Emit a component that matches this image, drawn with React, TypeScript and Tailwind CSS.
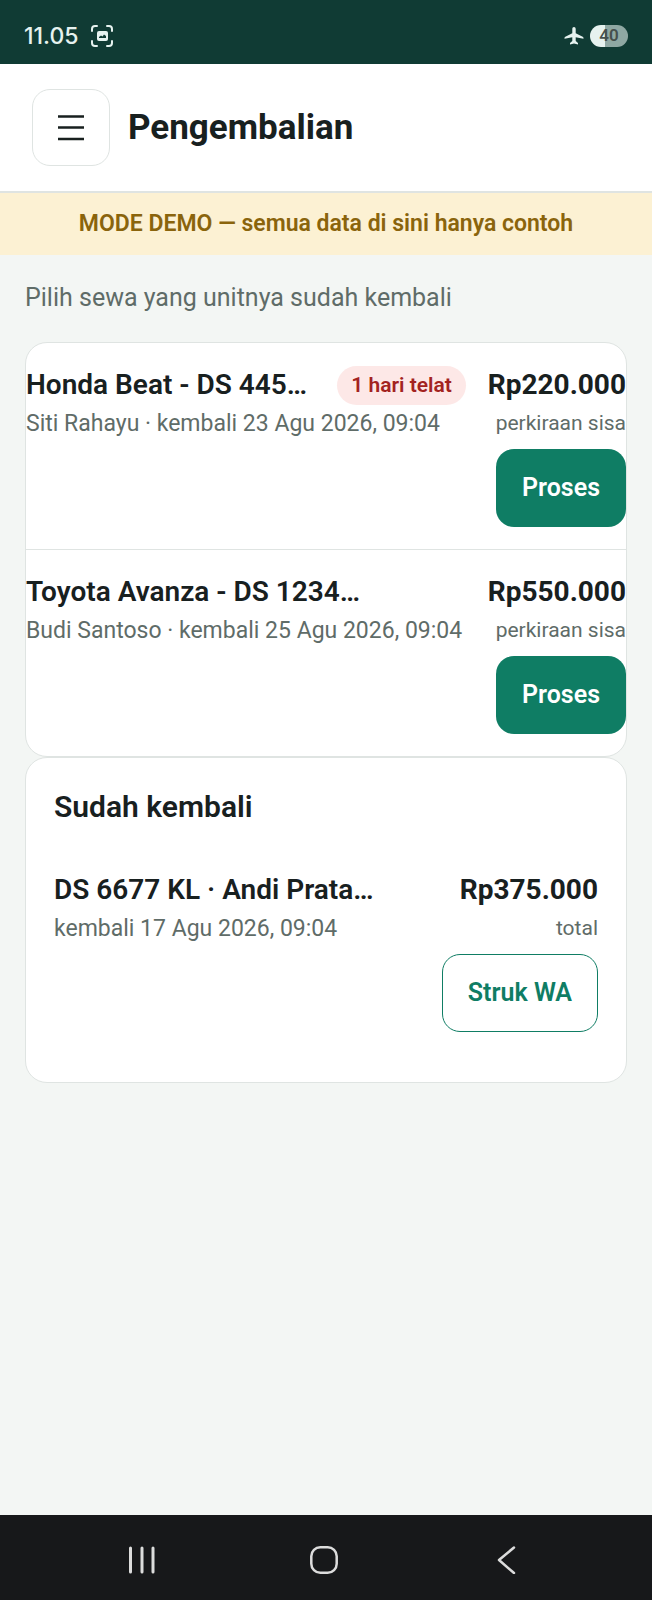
import type { ReactNode } from 'react';

type Rental = {
  title: string;
  detail: string;
  amount: string;
  note: string;
  late?: string;
};

const activeRentals: Rental[] = [
  {
    title: 'Honda Beat - DS 445…',
    detail: 'Siti Rahayu · kembali 23 Agu 2026, 09:04',
    amount: 'Rp220.000',
    note: 'perkiraan sisa',
    late: '1 hari telat',
  },
  {
    title: 'Toyota Avanza - DS 1234…',
    detail: 'Budi Santoso · kembali 25 Agu 2026, 09:04',
    amount: 'Rp550.000',
    note: 'perkiraan sisa',
  },
];

const returnedRentals: Rental[] = [
  {
    title: 'DS 6677 KL · Andi Prata…',
    detail: 'kembali 17 Agu 2026, 09:04',
    amount: 'Rp375.000',
    note: 'total',
  },
];

function StatusBar() {
  return (
    <div className="flex h-16 items-center justify-between bg-[#103b34] px-6 pt-2 text-[#e6f2ef]">
      <div className="flex items-center gap-3">
        <span className="font-['Inter',sans-serif] text-[23px] leading-7 font-medium">11.05</span>
        <svg className="size-[22px]" viewBox="0 0 22 22" fill="none" aria-hidden="true">
          <path
            d="M1 6V4a3 3 0 0 1 3-3h2M16 1h2a3 3 0 0 1 3 3v2M21 16v2a3 3 0 0 1-3 3h-2M6 21H4a3 3 0 0 1-3-3v-2"
            stroke="currentColor"
            strokeWidth="2"
            strokeLinecap="round"
          />
          <rect x="6" y="6" width="11" height="10" rx="2" fill="currentColor" />
          <path d="M8 13v-1l2-1.500 1.500 1 1.500-2 2 1.500v2z" fill="#103b34" />
        </svg>
      </div>
      <div className="flex items-center gap-1.5">
        <svg className="size-5" viewBox="0 0 20 20" fill="currentColor" aria-hidden="true">
          <path d="M10 1c1 0 1.700.8 1.700 2v4.200l7 3.600c.5.3.8.7.8 1.300v.7l-7.800-1.600v3.800l2.300 2v1.600L10 17.400l-4 1.200V17l2.300-2v-3.800L.5 12.800v-.7c0-.6.3-1 .8-1.300l7-3.600V3C8.300 1.800 9 1 10 1z" />
        </svg>
        <div className="flex h-[22px] w-[38px] items-center justify-center rounded-full bg-linear-to-r from-[#e6f2ef] from-40% to-[#8fa8a3] to-40% text-[17px] font-semibold text-[#454f4d]">
          40
        </div>
      </div>
    </div>
  );
}

function RentalRow({ rental, children }: { rental: Rental; children: ReactNode }) {
  return (
    <li className="flex items-start gap-[22px] py-[22px]">
      <div className="min-w-0 flex-1">
        <div className="flex items-center justify-between gap-2">
          <span className="truncate text-[28px] leading-10 font-semibold">{rental.title}</span>
          {rental.late && (
            <span className="shrink-0 rounded-full bg-[#fde8e7] px-3.5 text-[21px] leading-[39px] font-semibold text-[#a3231f]">
              {rental.late}
            </span>
          )}
        </div>
        <p className="truncate text-[23px] leading-[38px] text-[#5f6c68]">{rental.detail}</p>
      </div>
      <div className="flex shrink-0 flex-col items-end">
        <span className="text-[28px] leading-10 font-bold">{rental.amount}</span>
        <span className="mb-2 text-[21px] leading-9 text-[#5f6c68]">{rental.note}</span>
        {children}
      </div>
    </li>
  );
}

function NavBar() {
  return (
    <nav className="grid h-[85px] grid-cols-3 bg-[#17181a] pt-1 pr-[55px] pl-[51px] text-[#dcdcdc]">
      <button type="button" aria-label="Aplikasi terbaru" className="flex items-center justify-center">
        <svg className="size-7" viewBox="0 0 28 28" fill="none" stroke="currentColor" strokeWidth="3" strokeLinecap="round">
          <path d="M2.500 2v24M14 2v24M25 2v24" />
        </svg>
      </button>
      <button type="button" aria-label="Beranda" className="flex items-center justify-center">
        <svg className="size-7" viewBox="0 0 28 28" fill="none" stroke="currentColor" strokeWidth="2.500">
          <rect x="1.300" y="1.300" width="25.400" height="25.400" rx="9" />
        </svg>
      </button>
      <button type="button" aria-label="Kembali" className="flex items-center justify-center">
        <svg className="size-7" viewBox="0 0 28 28" fill="none" stroke="currentColor" strokeWidth="2.500" strokeLinecap="round" strokeLinejoin="round">
          <path d="M22 1.500 7 14 22 27" />
        </svg>
      </button>
    </nav>
  );
}

export default function App() {
  return (
    <div className="flex min-h-screen flex-col bg-[#f3f6f4] font-['Roboto',sans-serif] text-[#18201f]">
      <StatusBar />

      <header className="flex items-center gap-[18px] border-b-2 border-[#dfe4e2] bg-white px-8 py-[25px]">
        <button
          type="button"
          aria-label="Menu"
          className="flex h-[77px] w-[78px] items-center justify-center rounded-[18px] border border-[#dfe4e2] bg-white"
        >
          <svg className="size-7" viewBox="0 0 28 28" stroke="currentColor" strokeWidth="2.500">
            <path d="M1 2.500h26M1 13.500h26M1 25h26" />
          </svg>
        </button>
        <h1 className="text-[35px] leading-[48px] font-bold">Pengembalian</h1>
      </header>

      <p className="bg-[#fcf1d3] px-6 py-3 text-center text-[23px] leading-[38px] font-semibold text-[#8a640c]">
        MODE DEMO — semua data di sini hanya contoh
      </p>

      <main className="flex-1 px-[25px] pt-6">
        <p className="mb-[25px] text-[25px] leading-[38px] text-[#5f6c68]">Pilih sewa yang unitnya sudah kembali</p>

        <ul className="divide-y divide-[#dfe4e2] rounded-[22px] border border-[#dfe4e2] bg-white">
          {activeRentals.map((rental) => (
            <RentalRow key={rental.title} rental={rental}>
              <button
                type="button"
                className="h-[78px] rounded-[18px] bg-[#0f7d64] px-[26px] text-[25px] font-semibold text-white"
              >
                Proses
              </button>
            </RentalRow>
          ))}
        </ul>

        <section className="rounded-[22px] border border-[#dfe4e2] bg-white p-7">
          <h2 className="mb-5 text-[30px] leading-[42px] font-semibold">Sudah kembali</h2>
          <ul>
            {returnedRentals.map((rental) => (
              <RentalRow key={rental.title} rental={rental}>
                <button
                  type="button"
                  className="h-[78px] rounded-[18px] border border-[#0f7d64] bg-white px-[25px] text-[25px] font-semibold text-[#0f7d64]"
                >
                  Struk WA
                </button>
              </RentalRow>
            ))}
          </ul>
        </section>
      </main>

      <NavBar />
    </div>
  );
}
